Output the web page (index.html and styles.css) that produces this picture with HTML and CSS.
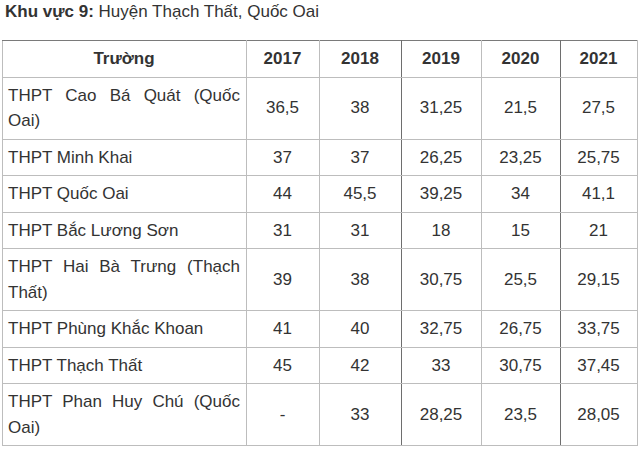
FILE: index.html
```html
<!DOCTYPE html>
<html lang="vi">
<head>
<meta charset="utf-8">
<link rel="stylesheet" href="styles.css">
</head>
<body>
<div class="page">
  <p class="title"><strong>Khu vực 9:</strong> Huyện Thạch Thất, Quốc Oai</p>
  <table class="scores">
    <colgroup>
      <col class="w-name"><col class="w-2017"><col class="w-2018"><col class="w-2019"><col class="w-2020"><col class="w-2021">
    </colgroup>
    <thead>
      <tr>
        <th>Trường</th><th>2017</th><th class="dk">2018</th><th>2019</th><th class="dk">2020</th><th>2021</th>
      </tr>
    </thead>
    <tbody>
      <tr><td class="name">THPT Cao Bá Quát (Quốc Oai)</td><td>36,5</td><td class="dk">38</td><td>31,25</td><td class="dk">21,5</td><td>27,5</td></tr>
      <tr><td class="name">THPT Minh Khai</td><td>37</td><td class="dk">37</td><td>26,25</td><td class="dk">23,25</td><td>25,75</td></tr>
      <tr><td class="name">THPT Quốc Oai</td><td>44</td><td class="dk">45,5</td><td>39,25</td><td class="dk">34</td><td>41,1</td></tr>
      <tr><td class="name">THPT Bắc Lương Sơn</td><td>31</td><td class="dk">31</td><td>18</td><td class="dk">15</td><td>21</td></tr>
      <tr><td class="name">THPT Hai Bà Trưng (Thạch Thất)</td><td>39</td><td class="dk">38</td><td>30,75</td><td class="dk">25,5</td><td>29,15</td></tr>
      <tr><td class="name">THPT Phùng Khắc Khoan</td><td>41</td><td class="dk">40</td><td>32,75</td><td class="dk">26,75</td><td>33,75</td></tr>
      <tr class="dk-top"><td class="name">THPT Thạch Thất</td><td>45</td><td class="dk">42</td><td>33</td><td class="dk">30,75</td><td>37,45</td></tr>
      <tr><td class="name">THPT Phan Huy Chú (Quốc Oai)</td><td>-</td><td class="dk">33</td><td>28,25</td><td class="dk">23,5</td><td>28,05</td></tr>
    </tbody>
  </table>
</div>
</body>
</html>
```

FILE: styles.css
```css
html, body {
  margin: 0;
  padding: 0;
  background: #ffffff;
}

.page {
  padding: 0 2px;
  font-family: "Liberation Sans", Arial, sans-serif;
  color: #333333;
}

.title {
  margin: 0 0 16px 3px;
  font-size: 17px;
  line-height: 24px;
}

.title strong {
  font-weight: bold;
}

.scores {
  border-collapse: collapse;
  table-layout: fixed;
  width: 635px;
  font-size: 17px;
  line-height: 25.5px;
  border-top: 1px solid #7a7a7a;
}

.w-name { width: 244px; }
.w-2017 { width: 73px; }
.w-2018 { width: 82px; }
.w-2019 { width: 80px; }
.w-2020 { width: 79px; }
.w-2021 { width: 77px; }

.scores th,
.scores td {
  border: 1px solid #bdbdbd;
  padding: 5px 6px 5px 5px;
  text-align: center;
  vertical-align: middle;
}

.scores th {
  font-weight: bold;
  border-top: 1px solid #7a7a7a;
}

.scores td.name {
  text-align: justify;
  text-align-last: left;
}

.scores .dk {
  border-right: 1px solid #6e6e6e;
}

.scores tr.dk-top td {
  border-top: 1px solid #6e6e6e;
}
```
